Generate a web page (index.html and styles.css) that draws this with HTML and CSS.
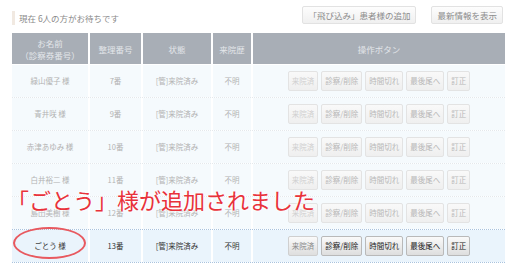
FILE: index.html
```html
<!DOCTYPE html>
<html lang="ja">
<head>
  <meta charset="UTF-8">
  <title>受付一覧</title>
  <link rel="stylesheet" href="styles.css">
</head>
<body>
  <div class="topbar">
    <p class="waiting">現在 6人の方がお待ちです</p>
    <div class="top-actions">
      <button class="top-btn">「飛び込み」患者様の追加</button>
      <button class="top-btn">最新情報を表示</button>
    </div>
  </div>

  <div class="queue">
    <div class="row head">
      <div class="cell">お名前<br>（診察券番号）</div>
      <div class="cell">整理番号</div>
      <div class="cell">状態</div>
      <div class="cell">来院歴</div>
      <div class="cell">操作ボタン</div>
    </div>

    <div class="row faded">
      <div class="cell">緑山優子 様</div>
      <div class="cell">7番</div>
      <div class="cell">[管]来院済み</div>
      <div class="cell">不明</div>
      <div class="cell ops">
        <button class="btn off">来院済</button><button class="btn">診察/削除</button><button class="btn">時間切れ</button><button class="btn">最後尾へ</button><button class="btn">訂正</button>
      </div>
    </div>
    <div class="row faded">
      <div class="cell">青井咲 様</div>
      <div class="cell">9番</div>
      <div class="cell">[管]来院済み</div>
      <div class="cell">不明</div>
      <div class="cell ops">
        <button class="btn off">来院済</button><button class="btn">診察/削除</button><button class="btn">時間切れ</button><button class="btn">最後尾へ</button><button class="btn">訂正</button>
      </div>
    </div>
    <div class="row faded">
      <div class="cell">赤津あゆみ 様</div>
      <div class="cell">10番</div>
      <div class="cell">[管]来院済み</div>
      <div class="cell">不明</div>
      <div class="cell ops">
        <button class="btn off">来院済</button><button class="btn">診察/削除</button><button class="btn">時間切れ</button><button class="btn">最後尾へ</button><button class="btn">訂正</button>
      </div>
    </div>
    <div class="row faded">
      <div class="cell">白井裕二 様</div>
      <div class="cell">11番</div>
      <div class="cell">[管]来院済み</div>
      <div class="cell">不明</div>
      <div class="cell ops">
        <button class="btn off">来院済</button><button class="btn">診察/削除</button><button class="btn">時間切れ</button><button class="btn">最後尾へ</button><button class="btn">訂正</button>
      </div>
    </div>
    <div class="row faded">
      <div class="cell">島田美樹 様</div>
      <div class="cell">12番</div>
      <div class="cell">[管]来院済み</div>
      <div class="cell">不明</div>
      <div class="cell ops">
        <button class="btn off">来院済</button><button class="btn">診察/削除</button><button class="btn">時間切れ</button><button class="btn">最後尾へ</button><button class="btn">訂正</button>
      </div>
    </div>
    <div class="row added">
      <div class="cell">ごとう 様</div>
      <div class="cell">13番</div>
      <div class="cell">[管]来院済み</div>
      <div class="cell">不明</div>
      <div class="cell ops">
        <button class="btn off">来院済</button><button class="btn">診察/削除</button><button class="btn">時間切れ</button><button class="btn">最後尾へ</button><button class="btn">訂正</button>
      </div>
    </div>

    <p class="notice">「ごとう」様が追加されました</p>
    <span class="circle"></span>
  </div>
</body>
</html>
```

FILE: styles.css
```css
body {
  margin: 0;
  padding: 6px 15px 0 12px;
  background-color: #fff;
  font-family: "Noto Sans CJK JP", "Noto Sans", sans-serif;
  color: #333;
}

.topbar {
  display: flex;
  justify-content: space-between;
  align-items: flex-start;
  height: 27px;
}

.waiting {
  margin: 5px 0 0;
  padding-left: 4px;
  border-left: 3px solid #f1e9e1;
  font-size: 8.5px;
  line-height: 14px;
  color: #8a8a8a;
}

.top-actions {
  display: flex;
  gap: 15px;
  margin-right: 2px;
}

.top-btn {
  height: 18px;
  padding: 0 5px;
  border: 1px solid #e2e2e2;
  border-radius: 2px;
  background: linear-gradient(#fdfdfd, #f0f0f0);
  font-family: inherit;
  font-size: 8.5px;
  line-height: 16px;
  color: #8c8c8c;
}

.queue {
  position: relative;
  width: 493px;
}

.row {
  display: grid;
  grid-template-columns: 76px 51px 68px 38px 1fr;
  column-gap: 2px;
  height: 32px;
  border-bottom: 1px dotted #e3e8ec;
  font-size: 7.5px;
}

.cell {
  display: flex;
  align-items: center;
  justify-content: center;
  text-align: center;
  line-height: 12px;
}

.head {
  height: 31px;
  border-bottom: 1px solid #fff;
  background-color: #fff;
  font-size: 8.5px;
}

.head .cell {
  background-color: #a8aeb6;
  color: #e3e6ea;
}

.faded {
  background-color: #fff;
}

.faded .cell {
  background-color: #f5fafd;
  color: #b3b3b3;
}

.added {
  background-color: #fff;
  border-top: 1px dotted #a9c3de;
  border-bottom: 1px dotted #a9c3de;
  height: 32px;
  margin-top: -1px;
}

.added .cell {
  background-color: #eaf4fc;
  color: #333;
}

.ops {
  gap: 3px;
}

.btn {
  height: 20px;
  padding: 0 3px;
  border: 1px solid #e3e3e3;
  border-radius: 2px;
  background: linear-gradient(#f9f9f9, #efefef);
  font-family: inherit;
  font-size: 7.5px;
  line-height: 18px;
  color: #b8b8b8;
}

.faded .btn.off {
  color: #d0d0d0;
}

.added .btn {
  border-color: #b9b9b9;
  background: linear-gradient(#fafafa, #dedede);
  color: #222;
}

.added .btn.off {
  color: #8a8a8a;
  border-color: #cfcfcf;
}

.notice {
  position: absolute;
  left: -5px;
  top: 155px;
  margin: 0;
  font-size: 22px;
  line-height: 22px;
  color: #e8323b;
  text-shadow: 0 0 2px #fff, 0 0 2px #fff, 0 0 3px #fff;
  white-space: nowrap;
}

.circle {
  position: absolute;
  left: 1px;
  top: 194px;
  width: 69px;
  height: 28px;
  border: 2px solid #e8595f;
  border-radius: 50%;
}
```
